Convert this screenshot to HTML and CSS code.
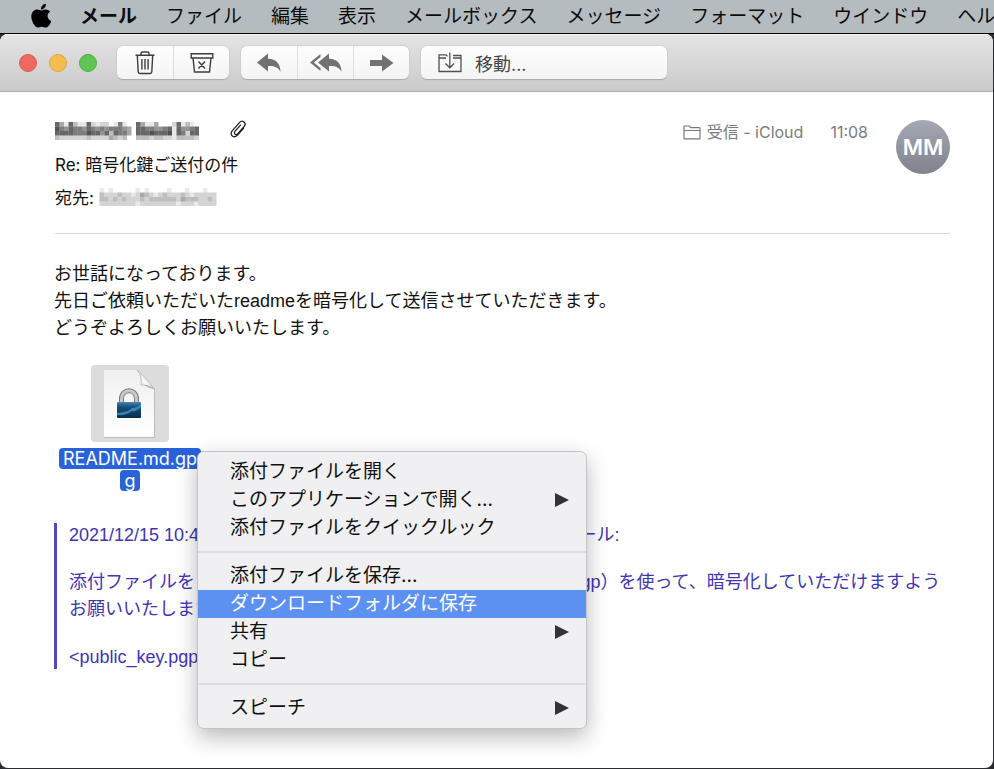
FILE: index.html
```html
<!DOCTYPE html>
<html lang="ja">
<head>
<meta charset="utf-8">
<title>メール</title>
<link rel="stylesheet" href="styles.css">
</head>
<body>
<nav class="menubar" aria-label="メニューバー">
  <button class="apple" aria-label="アップル"><svg viewBox="0 0 384 480" width="20" height="25"><path d="M319 254c0-37 16-64 50-84-19-27-47-42-84-45-35-3-74 20-88 20-15 0-49-19-76-19C65 127 6 171 6 261c0 27 5 54 15 82 13 38 60 131 109 129 26-1 44-18 77-18 33 0 50 18 78 18 50-1 93-85 105-123-67-32-71-92-71-95zM261 90c28-33 25-64 24-75-24 2-53 17-69 36-18 20-28 45-26 74 26 2 50-12 71-35z"/></svg></button>
  <button class="app">メール</button>
  <button>ファイル</button>
  <button>編集</button>
  <button>表示</button>
  <button>メールボックス</button>
  <button>メッセージ</button>
  <button>フォーマット</button>
  <button>ウインドウ</button>
  <button>ヘルプ</button>
</nav>
<div class="window">
  <header class="toolbar">
    <div class="lights">
      <button class="light close" aria-label="閉じる"></button>
      <button class="light minimize" aria-label="しまう"></button>
      <button class="light expand" aria-label="フルスクリーン"></button>
    </div>
    <div class="group">
      <button aria-label="ゴミ箱"><svg width="20" height="24" viewBox="0 0 20 24" fill="none" stroke="#3c3c3c" stroke-width="1.4"><path d="M.5 4.2h19M6 4V2.4Q6 1 7.4 1h5.200Q14 1 14 2.400V4M2.300 4.200l.9 16.500q.1 1.800 1.800 1.800h10q1.700 0 1.800-1.800l.9-16.500M6.900 8v10.500M10 8v10.500M13.100 8v10.500"/></svg></button>
      <button aria-label="アーカイブ"><svg width="24" height="22" viewBox="0 0 24 22" fill="none" stroke="#3c3c3c" stroke-width="1.400"><path d="M1.200 1.700h21.600V6H1.200zM3 6l1.500 14h15L21 6M8.500 9.500l6.500 7M15 9.500l-6.500 7"/></svg></button>
    </div>
    <div class="group">
      <button aria-label="返信"><svg width="24" height="20" viewBox="0 0 24 20" fill="#727272"><path d="M0 9.500 11 .5v5.200c8 0 12.500 5 12.500 13.300C21.500 14.500 18 12.800 11 13v5.500z"/></svg></button>
      <button aria-label="全員に返信"><svg width="32" height="20" viewBox="0 0 32 20" fill="#727272"><path d="M8 9.500 19 .5v5.200c8 0 12.500 5 12.500 13.300C29.500 14.500 26 12.800 19 13v5.500z"/><path d="M10.500 1v3L3.800 9.500l6.700 5.500v3L0 9.500z"/></svg></button>
      <button aria-label="転送"><svg width="24" height="18" viewBox="0 0 24 18" fill="#727272"><path d="M0 6h12V.5L23.500 9 12 17.500V12H0z"/></svg></button>
    </div>
    <button class="move"><svg width="24" height="22" viewBox="0 0 24 22" fill="none" stroke="#505050" stroke-width="1.300"><path d="M8 6H2.500Q1 6 1 4.700V19.500H23V6H15M1 5V2.800h7l1.500 1.600M15 3.500h8V7M11.800 .5v15M7.500 11.500l4.300 4.300 4.300-4.300"/></svg><span>移動...</span></button>
  </header>
  <main class="message">
    <header class="headers">
      <div class="fields">
        <div class="field sender"><svg class="mosaic" data-cell="sender" width="144" height="18" viewBox="0 0 32 4" role="img" aria-label="差出人"></svg><svg class="clip" width="17" height="22" viewBox="0 0 17 22" fill="none" stroke="#222" stroke-width="1.300" stroke-linecap="round"><path d="M13.500 8.300 7.800 14.900C4 19-1 14.800 2.200 10.900L9.400 2.600C12.500-.9 17 2.900 14.100 6.500L7.800 13.700C6 15.800 3.200 13.600 5 11.400L10.500 5.100"/></svg></div>
        <div class="field">Re: 暗号化鍵ご送付の件</div>
        <div class="field to">宛先: <svg class="mosaic" data-cell="recipient" width="118" height="18" viewBox="0 0 26 4" role="img" aria-label="受取人"></svg></div>
      </div>
      <div class="meta">
        <span class="mailbox"><svg width="18" height="15" viewBox="0 0 18 15" fill="none" stroke="#777" stroke-width="1.200"><path d="M1 13V1.800Q1 1 1.800 1h4.400l1.600 1.700h8.400q.8 0 .8.8V13q0 .9-.8.900H1.800Q1 13.900 1 13zM1 5.500h16"/></svg>受信 - iCloud</span>
        <time>11:08</time>
      </div>
      <div class="avatar">MM</div>
    </header>
    <div class="content">
      <p>お世話になっております。<br>先日ご依頼いただいたreadmeを暗号化して送信させていただきます。<br>どうぞよろしくお願いいたします。</p>
      <figure class="attachment">
        <div class="tile"><svg width="56" height="70" viewBox="0 0 56 70">
          <defs>
            <linearGradient id="paper" x1="0" y1="0" x2="0" y2="1"><stop offset="0" stop-color="#f0f0f0"/><stop offset="1" stop-color="#fff"/></linearGradient>
            <linearGradient id="fold" x1="0" y1="1" x2="1" y2="0"><stop offset="0" stop-color="#aaa"/><stop offset=".4" stop-color="#fafafa"/><stop offset="1" stop-color="#aaa"/></linearGradient>
            <linearGradient id="lock" x1="0" y1="0" x2="0" y2="1"><stop offset="0" stop-color="#4d87ad"/><stop offset=".3" stop-color="#17507c"/><stop offset="1" stop-color="#0a2c4c"/></linearGradient>
          </defs>
          <path d="M2 2h33l18 18v49H2z" fill="#999" opacity=".5"/>
          <path d="M2 1h32q4 1 5 9 1 8 13 10v48H2z" fill="url(#paper)"/>
          <path d="M35 1q9 7 17 19-6-5-13-4 1-10-4-15z" fill="url(#fold)" stroke="#999" stroke-width=".5"/>
          <path d="M19.500 35v-5c0-11 15-11 15 0v5" fill="none" stroke="#777" stroke-width="5"/>
          <path d="M19.500 35v-5c0-11 15-11 15 0v5" fill="none" stroke="#c9c9c9" stroke-width="3"/>
          <rect x="15" y="33" width="24" height="16" rx="1" fill="url(#lock)"/>
          <path d="M15 44q12-1 15-5 5 0 9-4v3q-5 5-9 4-6 5-15 4z" fill="#3f9bcf" opacity=".75"/>
        </svg></div>
        <figcaption><span>README.md.gp<br>g</span></figcaption>
      </figure>
      <blockquote>
        <p class="line">2021/12/15 10:45、Makoto Morita &lt;makoto@example.net&gt;のメール:</p>
        <p>添付ファイルをご確認いただき、こちらの公開鍵（public_key.pgp）を使って、暗号化していただけますようお願いいたします。</p>
        <p class="line">&lt;public_key.pgp&gt;</p>
      </blockquote>
    </div>
    <div class="context" role="menu">
      <button role="menuitem">添付ファイルを開く</button>
      <button role="menuitem" class="sub">このアプリケーションで開く...</button>
      <button role="menuitem">添付ファイルをクイックルック</button>
      <hr>
      <button role="menuitem">添付ファイルを保存...</button>
      <button role="menuitem" class="active">ダウンロードフォルダに保存</button>
      <button role="menuitem" class="sub">共有</button>
      <button role="menuitem">コピー</button>
      <hr>
      <button role="menuitem" class="sub">スピーチ</button>
    </div>
  </main>
</div>
<script src="mosaic.js"></script>
</body>
</html>
```
FILE: styles.css
```css
* { box-sizing: border-box; }
html, body { height: 100%; }
body {
  margin: 0;
  display: flex;
  flex-direction: column;
  background: #2a2c30;
  color: #111;
  font-family: Inter, "Noto Sans CJK JP", sans-serif;
  overflow: hidden;
}
button {
  margin: 0;
  padding: 0;
  border: 0;
  background: none;
  color: inherit;
  font: inherit;
}
svg { display: block; flex: none; }
p { margin: 0; }

.menubar {
  flex: none;
  display: flex;
  align-items: center;
  gap: 29px;
  height: 34px;
  padding-left: 31px;
  background: #b4bcbf;
  border-bottom: 1px solid #000;
  color: #0c0c0c;
  font-size: 19px;
  line-height: 32px;
  white-space: nowrap;
  overflow: hidden;
}
.menubar button { flex: none; }
.menubar .app { font-weight: 700; }
.menubar .apple { padding-bottom: 3px; }

.window {
  flex: 1;
  display: flex;
  flex-direction: column;
  margin: 0 1px 1px 0;
  border-radius: 8px;
  background: #fff;
  overflow: hidden;
}
.toolbar {
  flex: none;
  display: flex;
  align-items: center;
  gap: 12px;
  height: 58px;
  padding-left: 19px;
  background: linear-gradient(#e6e4e6, #cacaca);
  border-bottom: 1px solid #aeaeae;
  box-shadow: inset 0 1px #f4f4f4;
}
.lights { display: flex; gap: 12px; margin-right: 8px; }
.light { width: 18px; height: 18px; border-radius: 50%; border: 1px solid; }
.close { background: #ee6a5f; border-color: #d95a50; }
.minimize { background: #f5bd4f; border-color: #dca53c; }
.expand { background: #61c554; border-color: #50ac45; }
.group, .move {
  display: flex;
  align-items: center;
  height: 33px;
  border-radius: 6px;
  background: linear-gradient(#fefefe, #f4f4f4);
  box-shadow: 0 1px 1px #a8a8a8, 0 0 0 1px #d2d2d2;
}
.group button {
  display: flex;
  align-items: center;
  justify-content: center;
  width: 56px;
  height: 33px;
}
.group button + button { border-left: 1px solid #dcdcdc; }
.move {
  gap: 13px;
  width: 246px;
  padding-left: 17px;
  color: #444;
  font-size: 18px;
}

.message { position: relative; flex: 1; }
.headers {
  display: flex;
  align-items: flex-start;
  margin: 0 43px 0 55px;
  padding: 22px 0 20px;
  border-bottom: 1px solid #d8d8d8;
}
.fields { flex: 1; }
.field { display: flex; align-items: center; height: 33px; font-size: 17px; white-space: pre; }
.sender { gap: 31px; }
.meta {
  display: flex;
  gap: 27px;
  margin: 6px 28px 0 0;
  color: #7c7c7c;
  font-size: 16px;
  line-height: 24px;
}
.mailbox { display: flex; align-items: center; gap: 6px; }
.avatar {
  width: 54px;
  height: 54px;
  margin-top: 6px;
  border-radius: 50%;
  background: linear-gradient(#a5a8b3, #80838e);
  color: #fff;
  font-size: 22px;
  font-weight: 600;
  line-height: 54px;
  text-align: center;
}

.content {
  margin: 0 43px 0 54px;
  padding-top: 27px;
  font-family: "Liberation Sans", "Noto Sans CJK JP", sans-serif;
  font-size: 18px;
  line-height: 27px;
}
.attachment { width: 142px; margin: 23px 0 0 5px; }
.tile {
  display: flex;
  align-items: center;
  justify-content: center;
  width: 78px;
  height: 77px;
  margin: 0 auto;
  border-radius: 4px;
  background: #dcdcdc;
}
figcaption {
  margin-top: 6px;
  color: #fff;
  font-family: Inter, sans-serif;
  line-height: 22px;
  text-align: center;
  white-space: nowrap;
}
figcaption span {
  padding: 0 4px;
  border-radius: 4px;
  background: #2963d9;
  -webkit-box-decoration-break: clone;
  box-decoration-break: clone;
}
blockquote {
  display: flex;
  flex-direction: column;
  gap: 22px;
  margin: 31px 0 0;
  padding-left: 12px;
  border-left: 3px solid #5249b8;
  color: #4034b4;
}
.line { line-height: 24px; }

.context {
  position: absolute;
  left: 197px;
  top: 359px;
  width: 390px;
  padding: 6px 0;
  border: 1px solid #c4c4c6;
  border-radius: 7px;
  background: #f0f0f2;
  box-shadow: 0 8px 22px rgba(0, 0, 0, .28);
  font-size: 19px;
  line-height: 28px;
}
.context button {
  display: flex;
  align-items: center;
  justify-content: space-between;
  width: 100%;
  height: 28px;
  padding: 0 17px 0 32px;
}
.context .active { background: #5c91f2; color: #fff; }
.sub::after {
  content: "";
  border-left: 14px solid #333;
  border-top: 7px solid transparent;
  border-bottom: 7px solid transparent;
}
.context hr { height: 2px; margin: 9px 0; border: 0; background: #dddde0; }
```
FILE: mosaic.js
```javascript
// Darkness of each block, 0 (white) to 9 (black), one string per row.
const mosaics = {
  sender: [
    "74173117212201610074114000271310",
    "86576657656566654077665567175567",
    "77776668775737664077787778176277",
    "32222223222243230033323322133332"
  ],
  recipient: [
    "10100000101000010001000100",
    "32223221243212322232122222",
    "33232322232333333243332232",
    "22222222122222222122212222"
  ]
};
for (const svg of document.querySelectorAll(".mosaic")) {
  mosaics[svg.dataset.cell].forEach((row, y) => {
    [...row].forEach((level, x) => {
      if (level === "0") return;
      const rect = document.createElementNS("http://www.w3.org/2000/svg", "rect");
      rect.setAttribute("x", x);
      rect.setAttribute("y", y);
      rect.setAttribute("width", 1);
      rect.setAttribute("height", 1);
      rect.setAttribute("fill-opacity", level * 0.085);
      svg.append(rect);
    });
  });
}
```
